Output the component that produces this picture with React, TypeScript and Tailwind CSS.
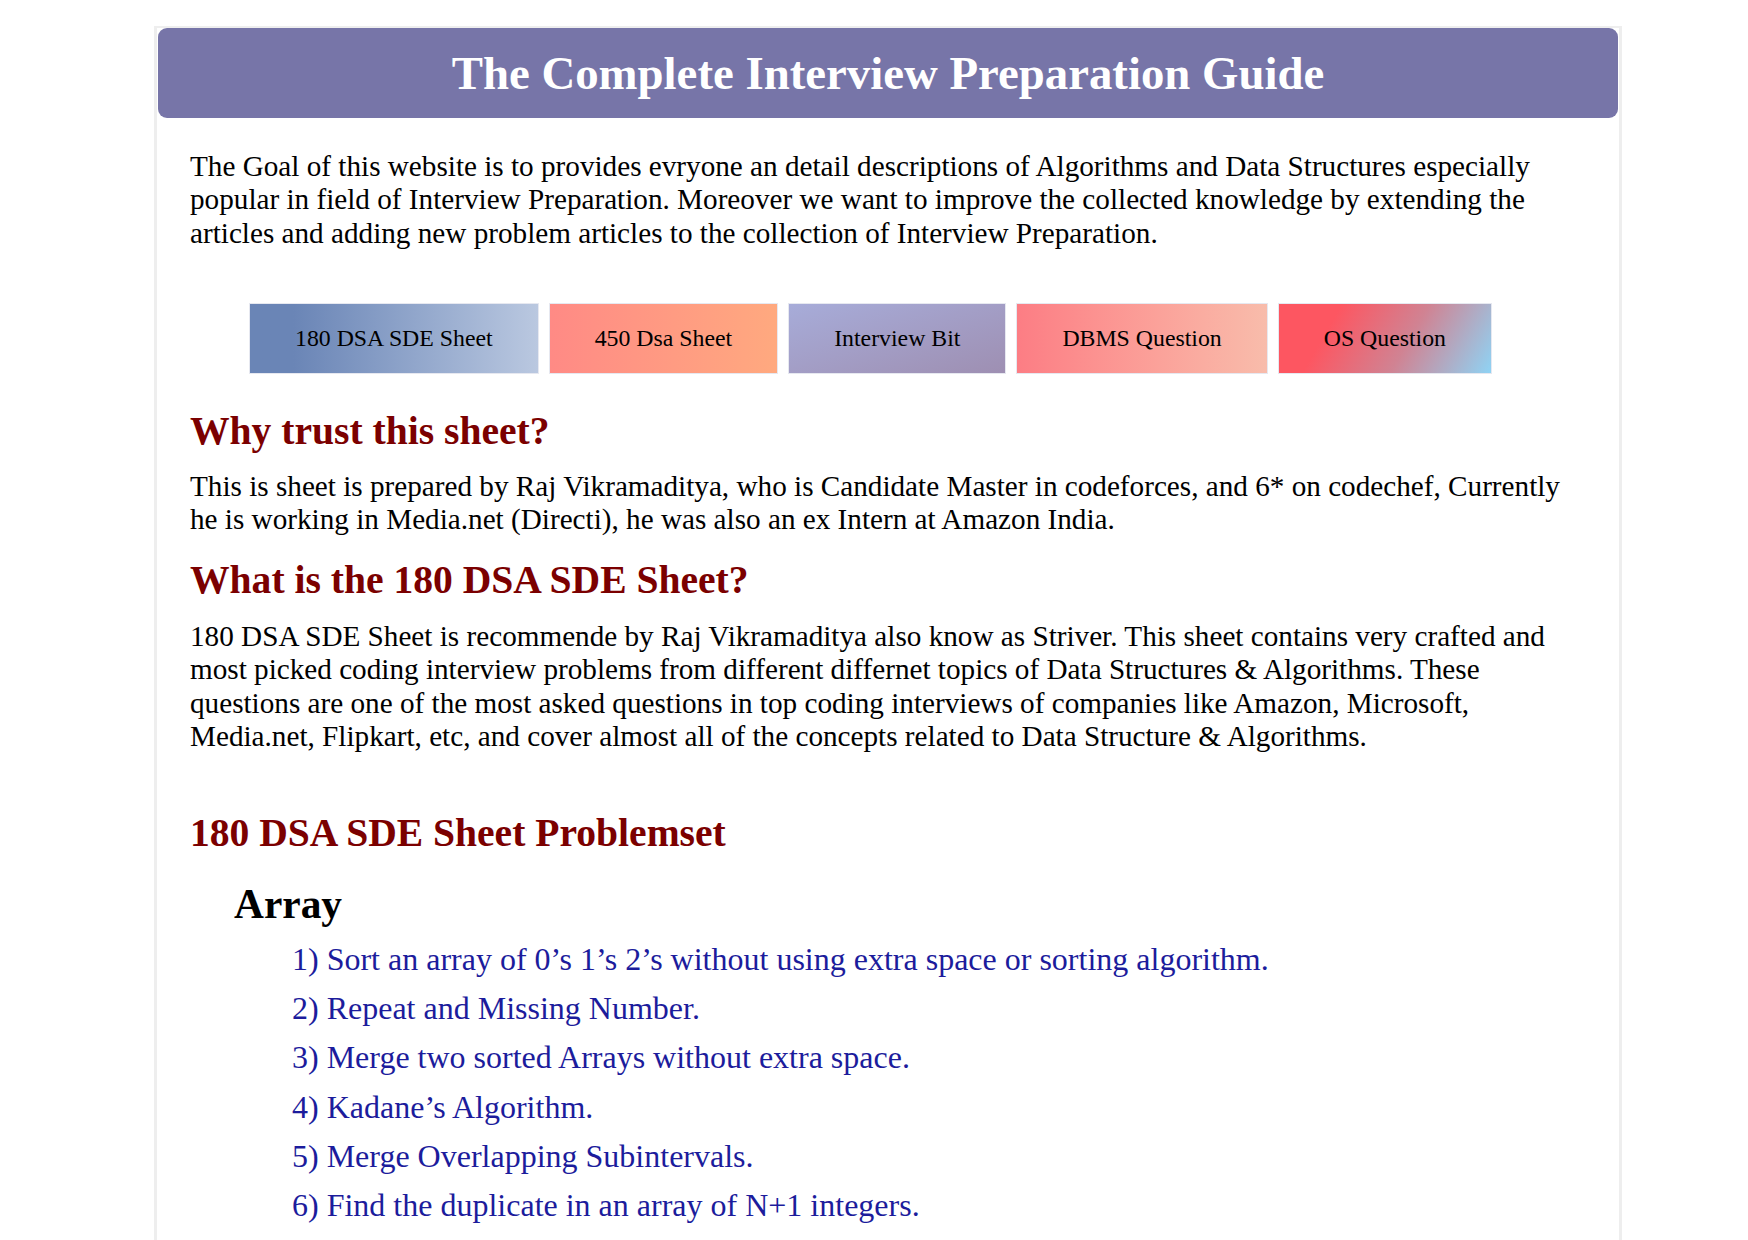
const links = [
  { label: "180 DSA SDE Sheet", cls: "bg-linear-to-r from-[#6a85b6] from-15% to-[#bac8e0]" },
  { label: "450 Dsa Sheet", cls: "bg-linear-to-r from-[#ff8a85] to-[#ffa97f]" },
  { label: "Interview Bit", cls: "bg-linear-to-br from-[#a7acd9] to-[#9e8fb2]" },
  { label: "DBMS Question", cls: "bg-linear-to-r from-[#fc7d84] to-[#f8bcab]" },
  { label: "OS Question", cls: "bg-linear-[120deg] from-[#fd5661] from-25% via-[#d08393] via-60% to-[#8fd3f4]" },
]

const problems = [
  "1) Sort an array of 0\u2019s 1\u2019s 2\u2019s without using extra space or sorting algorithm.",
  "2) Repeat and Missing Number.",
  "3) Merge two sorted Arrays without extra space.",
  "4) Kadane\u2019s Algorithm.",
  "5) Merge Overlapping Subintervals.",
  "6) Find the duplicate in an array of N+1 integers.",
]

function SectionTitle({ children, className = "" }: { children: React.ReactNode; className?: string }) {
  return <h2 className={"text-[39.6px] font-bold leading-[45.5px] text-[#7b0000] " + className}>{children}</h2>
}

export default function App() {
  return (
    <div className="min-h-screen bg-white font-['Liberation_Serif',serif] text-black">
      <div className="ml-[154px] mt-[26px] w-[1468px] border-x-[3px] border-t-[2px] border-[#eeeeee] pb-[300px]">
        {/* header banner */}
        <div className="mx-[1px] rounded-[9px] bg-[#7775a8] py-[18px] text-center">
          <h1 className="text-[46.8px] font-bold leading-[54px] text-white">The Complete Interview Preparation Guide</h1>
        </div>

        <div className="pl-[33px] pr-[46px]">
          <p className="mt-[32px] text-[29.2px] leading-[33.4px]">
            The Goal of this website is to provides evryone an detail descriptions of Algorithms and Data Structures especially popular in field of Interview Preparation. Moreover we want to improve the collected knowledge by extending the articles and adding new problem articles to the collection of Interview Preparation.
          </p>

          {/* sheet links */}
          <div className="mt-[53px] flex gap-[10px] pl-[59px]">
            {links.map((l) => (
              <a
                key={l.label}
                href="#"
                className={"border border-[#e6e8f0] px-[45px] py-[21px] text-[23.8px] leading-[27px] text-black " + l.cls}
              >
                {l.label}
              </a>
            ))}
          </div>

          <SectionTitle className="mt-[35px]">Why trust this sheet?</SectionTitle>
          <p className="mt-[15px] text-[29.2px] leading-[33.4px]">
            This is sheet is prepared by Raj Vikramaditya, who is Candidate Master in codeforces, and 6* on codechef, Currently he is working in Media.net (Directi), he was also an ex Intern at Amazon India.
          </p>

          <SectionTitle className="mt-[21px]">What is the 180 DSA SDE Sheet?</SectionTitle>
          <p className="mt-[17px] text-[29.2px] leading-[33.4px]">
            180 DSA SDE Sheet is recommende by Raj Vikramaditya also know as Striver. This sheet contains very crafted and most picked coding interview problems from different differnet topics of Data Structures &amp; Algorithms. These questions are one of the most asked questions in top coding interviews of companies like Amazon, Microsoft, Media.net, Flipkart, etc, and cover almost all of the concepts related to Data Structure &amp; Algorithms.
          </p>

          <SectionTitle className="mt-[57px]">180 DSA SDE Sheet Problemset</SectionTitle>

          <div className="pl-[44px]">
            <h3 className="mt-[25px] text-[41.4px] font-bold leading-[47.6px]">Array</h3>
            <ul className="mt-[12px] flex flex-col gap-[12px] pl-[58px]">
              {problems.map((p) => (
                <li key={p}>
                  <a href="#" className="text-[32px] leading-[37.3px] text-[#1c1c9c]">
                    {p}
                  </a>
                </li>
              ))}
            </ul>
          </div>
        </div>
      </div>
    </div>
  )
}
